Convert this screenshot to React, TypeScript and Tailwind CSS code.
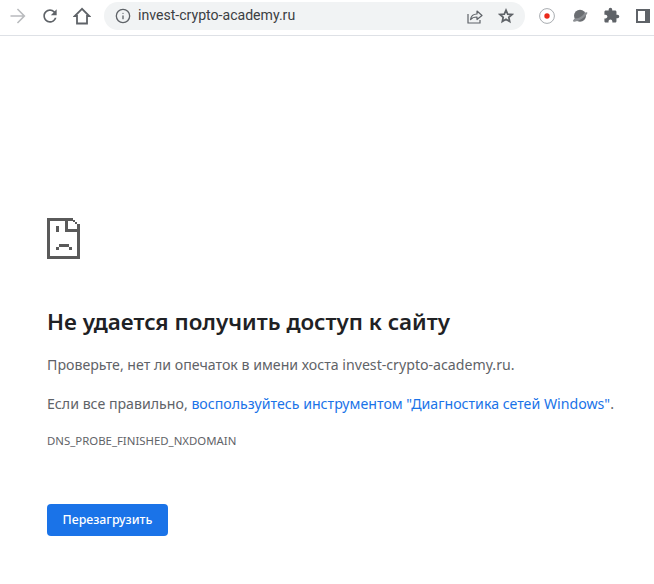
import { Info } from 'lucide-react'

function ForwardIcon() {
  return (
    <svg width="16" height="16" viewBox="0 0 16 16" fill="#b9bbbe">
      <path d="M8 0.500 6.900 1.600 12.500 7.200H0.500v1.600h12L6.900 14.400 8 15.500 15.500 8z" />
    </svg>
  )
}

function ReloadIcon() {
  return (
    <svg width="20" height="20" viewBox="0 0 24 24" fill="#5f6368">
      <path d="M17.650 6.350A7.958 7.958 0 0 0 12 4c-4.420 0-7.990 3.580-7.990 8s3.570 8 7.990 8c3.730 0 6.840-2.550 7.730-6h-2.080A5.990 5.990 0 0 1 12 18c-3.310 0-6-2.690-6-6s2.690-6 6-6c1.660 0 3.140.69 4.220 1.780L13 11h7V4l-2.350 2.350z" />
    </svg>
  )
}

function HomeIcon() {
  return (
    <svg width="18" height="18" viewBox="0 0 18 18" fill="none" stroke="#5f6368" strokeWidth="1.800">
      <path d="M9 1.800 1.800 9H4v7.500h10V9h2.200z" />
    </svg>
  )
}

function ShareIcon() {
  return (
    <svg width="16" height="16" viewBox="0 0 16 16" fill="none" stroke="#5f6368" strokeWidth="1.200">
      <path d="M1 6v9h12v-3" />
      <path d="M3.500 11.500C4 8.200 6.700 6 10 6V3l5 4.500L10 11.500V9c-2.800 0-5 .8-6.500 2.500z" strokeLinejoin="round" />
    </svg>
  )
}

function StarIcon() {
  return (
    <svg width="16" height="16" viewBox="0 0 16 16" fill="none" stroke="#5f6368" strokeWidth="1.700">
      <path d="M8 2.200 9.700 6.100l4.300.4-3.200 2.800.9 4.200L8 11.300l-3.700 2.200.9-4.200L2 6.500l4.300-.4z" />
    </svg>
  )
}

function RecordIcon() {
  return (
    <svg width="16" height="16" viewBox="0 0 16 16">
      <circle cx="8" cy="8" r="7.400" fill="#fff" stroke="#a8acb0" strokeWidth="1" />
      <circle cx="8" cy="8" r="2.700" fill="#ea2a1a" />
    </svg>
  )
}

function PlanetIcon() {
  return (
    <svg width="16" height="16" viewBox="0 0 16 16">
      <circle cx="8" cy="7.800" r="6" fill="#6b6e72" />
      <path d="M1 13.300c-.4-.8.7-2 2.100-3.100 3 .6 7.700-2 9.400-5.500.9-.4 2.500-.9 2.800-.1.500 1.500-3 5-6.600 7-3.300 1.800-7 2.800-7.700 1.700z" fill="#8d9094" />
    </svg>
  )
}

function PuzzleIcon() {
  return (
    <svg width="17" height="17" viewBox="0 0 24 24" fill="#5f6368">
      <path d="M20.500 11H19V7c0-1.100-.9-2-2-2h-4V3.500a2.500 2.500 0 0 0-5 0V5H4c-1.100 0-2 .9-2 2v3.800h1.500c1.500 0 2.700 1.200 2.700 2.700S5 16.200 3.500 16.200H2V20c0 1.100.9 2 2 2h3.800v-1.500c0-1.500 1.200-2.700 2.700-2.700s2.700 1.200 2.700 2.700V22H17c1.100 0 2-.9 2-2v-4h1.500a2.500 2.500 0 0 0 0-5z" />
    </svg>
  )
}

function SidePanelIcon() {
  return (
    <svg width="14" height="14" viewBox="0 0 14 14" fill="#5f6368">
      <path d="M0 0h14v14H0zM2 2v10h7V2z" fillRule="evenodd" />
    </svg>
  )
}

function SadTabIcon() {
  return (
    <svg width="33" height="41" viewBox="0 0 33 41" fill="#5a5a5a" shapeRendering="crispEdges" className="block">
      <rect x="0" y="0" width="26" height="3" />
      <rect x="0" y="0" width="3" height="41" />
      <rect x="0" y="38" width="33" height="3" />
      <rect x="30" y="6" width="3" height="35" />
      <rect x="18" y="0" width="3" height="14" />
      <rect x="18" y="11" width="15" height="3" />
      <rect x="26" y="2" width="2" height="2" />
      <rect x="28" y="4" width="2" height="2" />
      <rect x="9" y="8" width="3" height="6" />
      <rect x="12" y="26" width="10" height="3" />
      <rect x="9" y="29" width="3" height="3" />
      <rect x="22" y="29" width="3" height="3" />
    </svg>
  )
}

export default function App() {
  return (
    <div className="min-h-[584px] bg-white font-['Noto_Sans',sans-serif]">
      {/* Toolbar */}
      <div className="flex h-9 items-center border-b border-[#dee1e6] bg-white pb-1">
        <div className="flex w-[104px] shrink-0 items-center pl-[10px]">
          <ForwardIcon />
          <span className="ml-[14px]"><ReloadIcon /></span>
          <span className="ml-[13px]"><HomeIcon /></span>
        </div>
        <div className="flex h-7 w-[421px] shrink-0 items-center rounded-full bg-[#f1f3f4] pl-[11px] pr-[11px]">
          <Info size={16} strokeWidth={2} className="text-[#5f6368]" />
          <span className="ml-[7px] flex-1 font-['Roboto',sans-serif] text-[14.100px] text-[#3c4043]">invest-crypto-academy.ru</span>
          <ShareIcon />
          <span className="ml-[15px]"><StarIcon /></span>
        </div>
        <div className="ml-[14px] flex items-center">
          <RecordIcon />
          <span className="ml-[17px]"><PlanetIcon /></span>
          <span className="ml-[15px]"><PuzzleIcon /></span>
          <span className="ml-[16px]"><SidePanelIcon /></span>
        </div>
      </div>

      {/* Error page */}
      <div className="pl-[47px] pt-[182px]">
        <SadTabIcon />
        <h1 className="mt-[47px] text-[22.400px] leading-[32px] font-semibold text-[#202124]">Не удается получить доступ к сайту</h1>
        <p className="mt-[15px] text-[14.170px] leading-[24px] text-[#5f6368]">
          Проверьте, нет ли опечаток в имени хоста invest-crypto-academy.ru.
        </p>
        <p className="mt-[15px] text-[14.170px] leading-[24px] text-[#5f6368]">
          Если все правильно, <span className="text-[#1a73e8]">воспользуйтесь инструментом "Диагностика сетей Windows"</span>.
        </p>
        <p className="mt-[17px] text-[11.400px] leading-[16px] text-[#5f6368]">DNS_PROBE_FINISHED_NXDOMAIN</p>
        <button className="mt-[55px] flex h-8 w-[121px] items-center justify-center rounded-[4px] bg-[#1a73e8] text-[12.350px] font-medium text-white">
          Перезагрузить
        </button>
      </div>
    </div>
  )
}
